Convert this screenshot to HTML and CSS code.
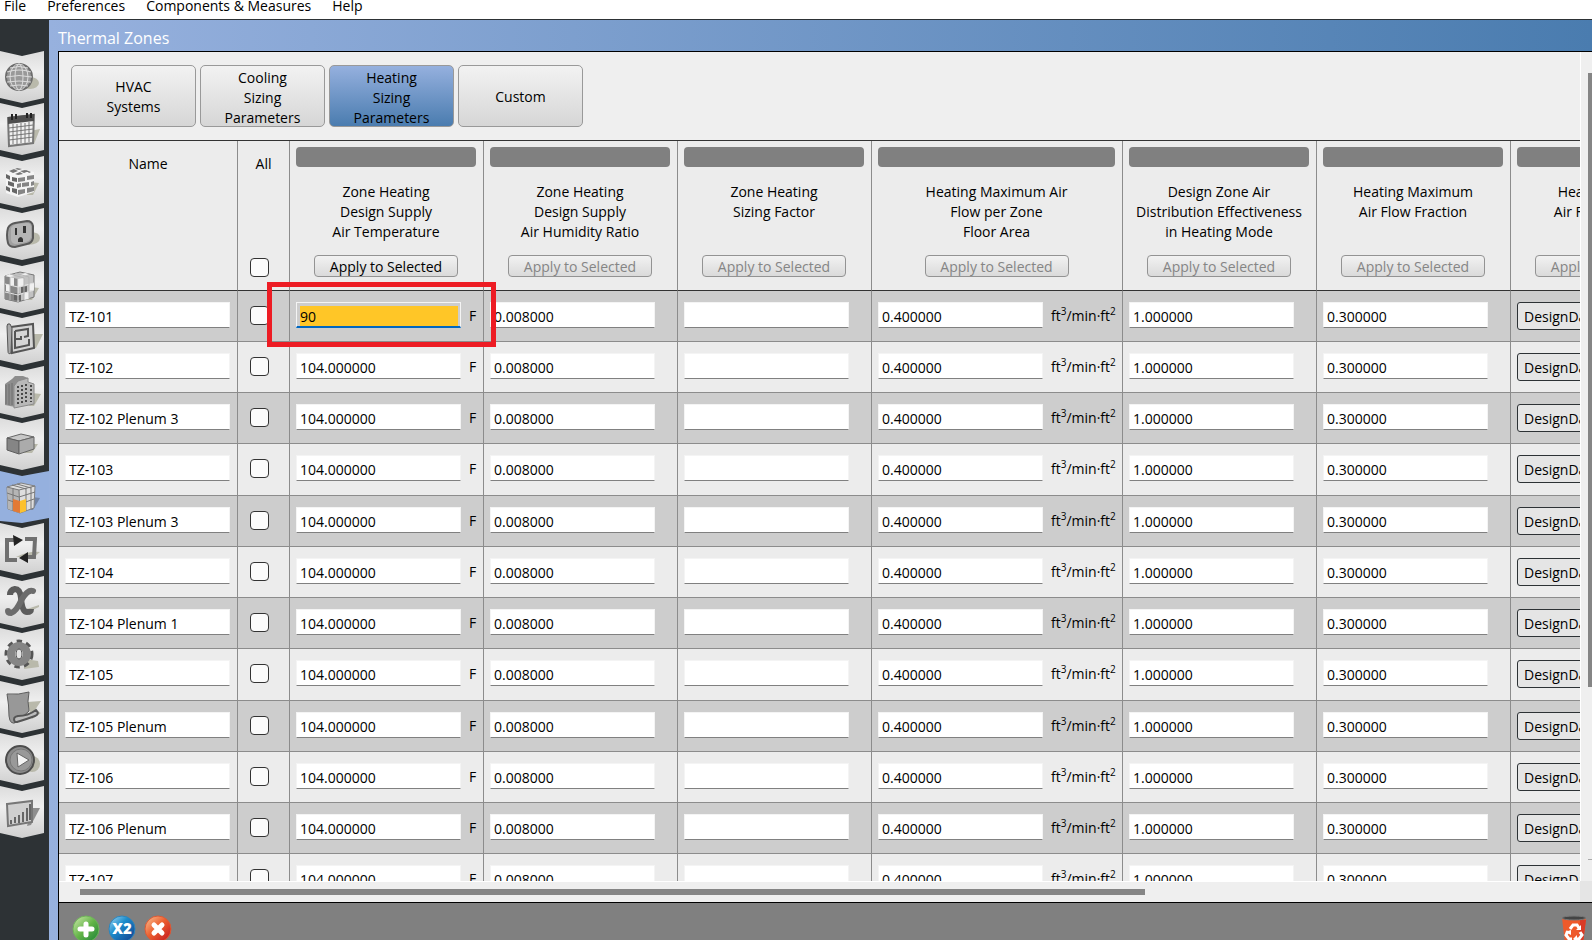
FILE: index.html
```html
<!DOCTYPE html>
<html lang="en">

<head>
  <meta charset="UTF-8">
  <meta name="viewport" content="width=device-width, initial-scale=1.0">
  <title>Thermal Zones</title>
  <link rel="stylesheet" href="styles.css">
</head>

<body>
  <nav class="menu-bar">
    <a href="#file">File</a>
    <a href="#preferences">Preferences</a>
    <a href="#components">Components &amp; Measures</a>
    <a href="#help">Help</a>
  </nav>

  <div class="app">
    <nav class="sidebar">
      <a href="#site" class="side-tab" aria-label="Site">
        <svg viewBox="0 0 48 52">
          <ellipse class="shade" cx="30" cy="32" rx="9" ry="6" />
          <circle cx="19" cy="26" r="13" fill="#999" stroke="#6d6d6d" stroke-width="2" />
          <g fill="none" stroke="#dcdcdc">
            <ellipse cx="19" cy="26" rx="4" ry="13" />
            <ellipse cx="19" cy="26" rx="9" ry="13" />
            <path d="M6 26q13-3 26 0M7 21q12-4 24 0M10 17q9-3 18 0M7 31q12-2 24 0M10 35q9-2 18 0" />
          </g>
        </svg>
      </a>
      <a href="#schedules" class="side-tab" aria-label="Schedules">
        <svg viewBox="0 0 48 52">
          <path class="shade" d="M30 28l10-2-6 15h-6z" />
          <path d="M8 15l26-3-1 28-24 3z" fill="#f0f0f0" stroke="#777" stroke-width="2" />
          <path d="M8 14l26-3v7L8 21z" fill="#4e4e4e" />
          <path d="M12 11v6M16 11v5M27 10v5M31 10v5" stroke="#222" stroke-width="2" />
          <path d="M9 25l24-3M9 29l24-3M9 33l24-3M9 37l24-3M13 21v20M17 21v20M21 20v20M25 20v20M29 19v20" stroke="#777" fill="none" />
        </svg>
      </a>
      <a href="#constructions" class="side-tab" aria-label="Constructions">
        <svg viewBox="0 0 48 52">
          <path class="shade" d="M30 26l9 1-6 12h-6z" />
          <path d="M6 16l11-4 17 4v20l-16 5L6 37z" fill="#f5f5f5" />
          <path d="M9 15l5-2 4 2-5 2zM17 12l5 1-3 1-4-1zM20 15l5-1 4 1-5 2zM26 14l5 2-2 1zM15 18l5-2 3 2-5 1z" fill="#777" />
          <path d="M6 18l4 2v4l-4-2zM12 21l5 1v4l-5-1zM6 30l4 2v4l-4-2zM12 32l5 1v5l-5-2zM8 25l6 2v4l-6-2z" fill="#666" />
          <path d="M18 22l7-1v4l-7 1zM27 20l7-1v4l-7 1zM17 28l4-1v4l-4 1zM22 27l7-1v4l-7 1zM31 26l3-1v4l-3 1zM18 34l7-1v4l-7 2zM27 32l7-1v4l-7 2z" fill="#858585" />
        </svg>
      </a>
      <a href="#loads" class="side-tab" aria-label="Loads">
        <svg viewBox="0 0 48 52">
          <path class="shade" d="M30 24q10 0 10 6t-12 7z" />
          <path d="M8 20q2-4 7-5l12-2q5 0 6 5v12q-1 5-6 6l-12 3q-6 0-7-4-2-8 0-15z" fill="#a0a0a0" stroke="#595959" stroke-width="2" />
          <path d="M11 20q2-3 6-4l10-1q4 0 4 4v10q-1 4-5 5l-10 2q-4 0-5-4z" fill="#b5b5b5" />
          <path d="M15 20h2v7h-2zM23 18h3v7h-3zM18 34v-3q3-4 5 0v3z" fill="#333" />
        </svg>
      </a>
      <a href="#space-types" class="side-tab" aria-label="Space Types">
        <svg viewBox="0 0 48 52">
          <path class="shade" d="M30 26l9 1-7 12h-6z" />
          <path d="M5 15l15-4 14 3v22l-16 5L5 38z" fill="#c2c2c2" stroke="#777" />
          <path d="M5 15l13 3v23L5 38z" fill="#888" />
          <path d="M18 18l6-1v8l-6 1zM24 32l5-1v7l-5 1zM29 23l5-1v7l-5 1zM5 15l5-2 5 2-5 1zM10 16l4 1v8l-4-1zM6 23l4 1v7l-4-1zM20 14l5-2 4 1-5 2z" fill="#f0f0f0" />
          <path d="M21 26l6-1v6l-6 1zM14 32l7 1v7l-7-1z" fill="#656565" />
          <path d="M5 23l13 3 16-4M5 31l13 3 16-5M18 18v23" fill="none" stroke="#e3e3e3" />
          <path d="M10 16v23M24 17v22M29 16v22M10 13l14 4M15 12l14 4" fill="none" stroke="#b5b5b5" />
        </svg>
      </a>
      <a href="#geometry" class="side-tab" aria-label="Geometry">
        <svg viewBox="0 0 48 52">
          <path class="shade" d="M32 21l11 0-7 14h-6z" />
          <path d="M11 14l22-3 1 24-22 5z" fill="#d5d5d5" stroke="#555" stroke-width="2" />
          <path d="M7 13q0-3 3-2l2 4-1 25q-3 2-3-2z" fill="#aaa" stroke="#555" />
          <path d="M15 18l13-2v7l-4 1M15 18v17l14-3v-6M15 26h6v-3" fill="none" stroke="#555" stroke-width="2" />
        </svg>
      </a>
      <a href="#facility" class="side-tab" aria-label="Facility">
        <svg viewBox="0 0 48 52">
          <path class="shade" d="M32 27l9 1-7 12h-5z" />
          <path d="M5 18l7-5 3-3h8l5 2v5l-13 4v20L5 39z" fill="#8d8d8d" />
          <path d="M14 20l4-5 10-3v4l6 2v20l-20 4z" fill="#b8b8b8" stroke="#8a8a8a" />
          <path d="M18 20v18M22 19v18M26 18v18M31 19v17" stroke="#484848" stroke-width="2" stroke-dasharray="2 2" />
          <path d="M6 19v19M9 18v21M12 17v22" stroke="#6f6f6f" />
        </svg>
      </a>
      <a href="#spaces" class="side-tab" aria-label="Spaces">
        <svg viewBox="0 0 48 52">
          <path class="shade" d="M30 26l8 0-6 9h-8z" />
          <path d="M7 20l14-4 13 3-15 4z" fill="#c7c7c7" stroke="#666" />
          <path d="M7 20l12 3v13L7 32z" fill="#858585" stroke="#5d5d5d" />
          <path d="M19 23l15-4v12l-15 5z" fill="#ababab" stroke="#666" />
        </svg>
      </a>
      <a href="#thermal-zones" class="side-tab selected" aria-label="Thermal Zones">
        <svg viewBox="0 0 48 52">
          <path d="M32 26l8 1-7 12h-6z" fill="#7184a6" />
          <path d="M7 16l14-4 14 3-1 22-14 5-12-4z" fill="#dedede" stroke="#808080" />
          <path d="M7 16l12 3 1 23-12-4z" fill="#b5b5b5" />
          <path d="M7 22l12 4 16-5M8 29l12 4 14-5M13 17v23M19 19l1 22M26 17v23M31 16v22M12 14l14 4M17 13l14 4M7 16l12 3 16-4" fill="none" stroke="#777" />
          <path d="M13 28l7 2v12l-7-2z" fill="#e37a35" />
          <path d="M20 30l6-2v12l-6 2z" fill="#fcc12e" />
        </svg>
      </a>
      <a href="#hvac-systems" class="side-tab" aria-label="HVAC Systems">
        <svg viewBox="0 0 48 52">
          <path d="M16 34q12-6 24-5l-6 5z" class="shade" />
          <path d="M15 17H7v20h10M25 16h10l-1 18h-7" fill="none" stroke="#707070" stroke-width="4" />
          <path d="M13 12l10 5-9 6zM28 29l-9 6 9 5z" fill="#222" />
        </svg>
      </a>
      <a href="#variables" class="side-tab" aria-label="Output Variables">
        <svg viewBox="0 0 48 52">
          <path d="M24 34l15-5v2l-13 6z" class="shade" />
          <path d="M10 19q0-5 5-6 5 0 6 9 1 14 6 14 4 0 4-3" fill="none" stroke="#5c5c5c" stroke-width="6" />
          <path d="M33 15q-5-2-11 8-6 13-11 14-3 0-3-2" fill="none" stroke="#6c6c6c" stroke-width="6" stroke-linecap="round" />
        </svg>
      </a>
      <a href="#settings" class="side-tab" aria-label="Simulation Settings">
        <svg viewBox="0 0 48 52">
          <path class="shade" d="M25 31l13 2 1 6-15 2z" />
          <circle cx="19" cy="26" r="12" fill="none" stroke="#555" stroke-width="5" stroke-dasharray="5 4" />
          <circle cx="19" cy="26" r="8" fill="none" stroke="#858585" stroke-width="8" />
          <ellipse cx="19" cy="26" rx="3" ry="5" fill="#e3e3e3" stroke="#555" />
        </svg>
      </a>
      <a href="#scripts" class="side-tab" aria-label="Measures">
        <svg viewBox="0 0 48 52">
          <path class="shade" d="M27 21l14-1-6 9 6 3-9 6z" />
          <path d="M7 13q12 1 22-2-2 9 0 19l-12 11q-7 4-8-6 0-11-2-22z" fill="#989898" stroke="#5d5d5d" />
          <path d="M15 41q-3-5 3-6 10 0 18-6 4 4-1 6-8 3-18 6z" fill="#bcbcbc" stroke="#555" stroke-width="2" />
        </svg>
      </a>
      <a href="#run" class="side-tab" aria-label="Run Simulation">
        <svg viewBox="0 0 48 52">
          <ellipse class="shade" cx="32" cy="31" rx="8" ry="8" />
          <circle cx="20" cy="27" r="14" fill="#8b8b8b" stroke="#4d4d4d" stroke-width="2" />
          <circle cx="21" cy="27" r="11" fill="#999" stroke="#777" />
          <path d="M17 20l12 7-11 7z" fill="#f4f4f4" stroke="#666" />
        </svg>
      </a>
      <a href="#results" class="side-tab" aria-label="Results Summary">
        <svg viewBox="0 0 48 52">
          <path d="M32 22h8l-9 17-4 1z" fill="#8e8e8e" />
          <path d="M7 18l25-3v21L8 40z" fill="#cfcfcf" stroke="#777" stroke-width="2" />
          <path d="M11 38v-4M15 37v-6M19 37v-8M23 36V26M27 35V22M30 34V18" stroke="#666" stroke-width="2" />
        </svg>
      </a>
    </nav>

    <main class="main">
      <h1 class="title">Thermal Zones</h1>

      <div class="panel">
        <div class="viewport">
          <div class="tabs">
            <button type="button" class="tab">HVAC<br>Systems</button>
            <button type="button" class="tab">Cooling<br>Sizing<br>Parameters</button>
            <button type="button" class="tab active">Heating<br>Sizing<br>Parameters</button>
            <button type="button" class="tab">Custom</button>
          </div>

          <table class="zones">
            <colgroup>
              <col class="col-name">
              <col class="col-all">
              <col class="col-field">
              <col class="col-field">
              <col class="col-field">
              <col class="col-wide">
              <col class="col-field">
              <col class="col-field">
              <col class="col-field">
            </colgroup>
            <thead>
              <tr id="zone-head">
                <th><div class="head-name">Name</div></th>
                <th>
                  <div class="head-all">
                    <label for="select-all">All</label>
                    <input type="checkbox" id="select-all">
                  </div>
                </th>
              </tr>
            </thead>
            <tbody id="zone-rows">
              <!-- Zone rows are added here -->
            </tbody>
          </table>
        </div>
        <div class="scroll-y"><div class="thumb-y"></div><div class="scroll-end"></div></div>
        <div class="scroll-x"><div class="thumb-x"></div></div>
        <div class="scroll-corner"></div>
      </div>

      <footer class="actions">
        <button type="button" aria-label="Add zone">
          <svg viewBox="0 0 28 28">
            <defs>
              <linearGradient id="green" x1="0" y1="0" x2="1" y2="1"><stop offset="0" stop-color="#d3ecb0" /><stop offset=".5" stop-color="#62b447" /><stop offset="1" stop-color="#197f38" /></linearGradient>
              <linearGradient id="blue" x1="0" y1="0" x2="1" y2="1"><stop offset="0" stop-color="#a9dcf5" /><stop offset=".4" stop-color="#1c8ccb" /><stop offset="1" stop-color="#123a8b" /></linearGradient>
              <linearGradient id="red" x1="0" y1="0" x2="1" y2="1"><stop offset="0" stop-color="#fbc79a" /><stop offset=".45" stop-color="#ec6030" /><stop offset="1" stop-color="#c01220" /></linearGradient>
            </defs>
            <circle cx="14" cy="14" r="13" fill="url(#green)" stroke="#6fb35a" />
            <path d="M14 9v11M8 14h12" stroke="#fff" stroke-width="5" stroke-linecap="round" />
          </svg>
        </button>
        <button type="button" aria-label="Duplicate zone">
          <svg viewBox="0 0 28 28">
            <circle cx="14" cy="14" r="13" fill="url(#blue)" stroke="#2c85bd" />
            <text x="14" y="19" class="icon-text">X2</text>
          </svg>
        </button>
        <button type="button" aria-label="Delete zone">
          <svg viewBox="0 0 28 28">
            <circle cx="14" cy="14" r="13" fill="url(#red)" stroke="#dd5a35" />
            <path d="M10 10l8 8M18 10l-8 8" stroke="#fff" stroke-width="5" stroke-linecap="round" />
          </svg>
        </button>
        <button type="button" class="purge" aria-label="Purge unused">
          <svg viewBox="0 0 28 28">
            <path d="M2 3l3 25h18l3-25z" fill="#ee5a2b" />
            <path d="M20 5h6l-3 23h-4z" fill="#d93a26" />
            <ellipse cx="14" cy="3" rx="12" ry="2" fill="#444" stroke="#777" />
            <path d="M10 14l3-4h4l2 3M20 17l2 3-3 4h-3M12 24H9l-3-4 2-4" fill="none" stroke="#fff" stroke-width="3" />
            <path d="M21 10v5h-5zM17 20v7l-4-3zM5 17l6-2v5z" fill="#fff" />
          </svg>
        </button>
      </footer>
    </main>
  </div>

  <script>
    // Table columns after the name and the tick box
    const fields = [
      { label: ['Zone Heating', 'Design Supply', 'Air Temperature'], value: '104.000000', unit: 'F', enabled: true },
      { label: ['Zone Heating', 'Design Supply', 'Air Humidity Ratio'], value: '0.008000' },
      { label: ['Zone Heating', 'Sizing Factor'], value: '' },
      { label: ['Heating Maximum Air', 'Flow per Zone', 'Floor Area'], value: '0.400000', unit: 'ft<sup>3</sup>/min·ft<sup>2</sup>' },
      { label: ['Design Zone Air', 'Distribution Effectiveness', 'in Heating Mode'], value: '1.000000' },
      { label: ['Heating Maximum', 'Air Flow Fraction'], value: '0.300000' },
      { label: ['Heating Design', 'Air Flow Method'], options: ['DesignDay', 'DesignDayWithLimit', 'Flow/Zone'] }
    ];

    const zones = [
      'TZ-101', 'TZ-102', 'TZ-102 Plenum 3', 'TZ-103', 'TZ-103 Plenum 3', 'TZ-104',
      'TZ-104 Plenum 1', 'TZ-105', 'TZ-105 Plenum', 'TZ-106', 'TZ-106 Plenum', 'TZ-107'
    ];

    // Column headings
    const head = document.getElementById('zone-head');
    fields.forEach(field => {
      const th = document.createElement('th');
      th.innerHTML = `
        <div class="head-field">
          <div class="head-bar"></div>
          <div class="head-label">${field.label.join('<br>')}</div>
          <button type="button" class="apply" ${field.enabled ? '' : 'disabled'}>Apply to Selected</button>
        </div>
      `;
      head.appendChild(th);
    });

    // One cell of a zone row
    function fieldCell(zone, field, editing) {
      const name = `${zone} ${field.label.join(' ')}`;
      if (field.options) {
        const options = field.options.map(option => `<option>${option}</option>`).join('');
        return `<td><div class="cell"><select aria-label="${name}">${options}</select></div></td>`;
      }
      const unit = field.unit ? `<span class="unit">${field.unit}</span>` : '';
      return `
        <td class="${editing ? 'marked' : ''}">
          <div class="cell">
            <input type="text" class="${editing ? 'editing' : ''}" aria-label="${name}" value="${editing ? '90' : field.value}">
            ${unit}
          </div>
        </td>
      `;
    }

    const rows = document.getElementById('zone-rows');
    zones.forEach((zone, row) => {
      const tr = document.createElement('tr');
      tr.innerHTML = `
        <td><div class="cell"><input type="text" aria-label="Zone name" value="${zone}"></div></td>
        <td><div class="cell cell-check"><input type="checkbox" aria-label="Select ${zone}"></div></td>
        ${fields.map((field, col) => fieldCell(zone, field, row === 0 && col === 0)).join('')}
      `;
      rows.appendChild(tr);
    });
  </script>
</body>

</html>
```
FILE: styles.css
```css
*,
*::after {
  margin: 0;
  padding: 0;
  box-sizing: border-box;
}

body {
  display: flex;
  flex-direction: column;
  height: 100vh;
  overflow: hidden;
  font-family: "Open Sans", "Noto Sans", sans-serif;
  font-size: 14px;
  line-height: 20px;
  color: #000;
  background-color: #fff;
}

button,
input,
select {
  font: inherit;
  color: inherit;
}

/* Menu */
.menu-bar {
  display: flex;
  flex: none;
  gap: 21px;
  height: 20px;
  padding-left: 4px;
  border-bottom: 1px solid #2d3235;
  line-height: 12px;
}

.menu-bar a {
  color: #000;
  text-decoration: none;
}

.app {
  display: flex;
  flex: 1;
  min-height: 0;
}

/* Sidebar */
.sidebar {
  display: flex;
  flex: none;
  flex-direction: column;
  width: 49px;
  padding-top: 31px;
  background-color: #2d3235;
}

.side-tab {
  display: block;
  flex: none;
  height: 52px;
  background: linear-gradient(#dcdcdc, #efefef 40%, #cfcfcf);
  clip-path: polygon(0 0, 22px 5px, 44px 0, 44px 47px, 22px 52px, 0 47px);
}

.side-tab:nth-child(even) {
  margin-bottom: 1px;
}

.side-tab.selected {
  background: #95b0de;
  clip-path: polygon(0 0, 22px 5px, 49px 0, 49px 47px, 22px 52px, 0 50px);
}

.side-tab svg {
  display: block;
  width: 48px;
  height: 52px;
}

.shade {
  fill: #b9b9ab;
}

/* Main area */
.main {
  display: flex;
  flex: 1;
  flex-direction: column;
  min-width: 0;
  padding-left: 9px;
  background: linear-gradient(to right, #97b1de, #4a7caf);
}

.title {
  flex: none;
  height: 31px;
  color: #fff;
  font-size: 16px;
  font-weight: 400;
  line-height: 37px;
}

.panel {
  display: grid;
  flex: 1;
  grid-template-columns: minmax(0, 1fr) 12px;
  grid-template-rows: minmax(0, 1fr) 21px;
  min-height: 0;
  border-top: 1px solid #000;
  border-left: 1px solid #000;
  background-color: #efefef;
}

.viewport {
  overflow: hidden;
}

.tabs {
  display: flex;
  gap: 4px;
  padding: 13px 12px;
}

.tab {
  width: 125px;
  height: 62px;
  padding-top: 2px;
  border: 1px solid #999;
  border-radius: 5px;
  background: linear-gradient(#f2f2f2, #d6d6d6);
}

.tab.active {
  background: linear-gradient(#95b0de, #4a7caf);
}

/* Zone table */
.zones {
  width: 1646px;
  table-layout: fixed;
  border-collapse: separate;
  border-spacing: 0;
  border-top: 1px solid #333;
}

.col-name {
  width: 179px;
}

.col-all {
  width: 52px;
}

.col-field {
  width: 194px;
}

.col-wide {
  width: 251px;
}

.zones th,
.zones td {
  border-right: 1px solid #8c8c8c;
  border-bottom: 1px solid #8c8c8c;
  vertical-align: top;
}

.zones th {
  height: 150px;
  border-bottom-color: #333;
  background-color: #ececec;
  font-weight: normal;
}

.zones td {
  height: 51px;
  background-color: #ececec;
}

.zones tr:nth-child(odd) td {
  background-color: #cdcdcd;
}

.zones tr:nth-child(4n) td {
  height: 52px;
}

.head-name {
  padding: 13px 6px;
}

.head-all {
  display: flex;
  flex-direction: column;
  align-items: center;
  justify-content: space-between;
  height: 149px;
  padding: 13px 6px;
}

.head-all input {
  align-self: flex-start;
  margin-left: 6px;
}

.head-field {
  display: flex;
  flex-direction: column;
  align-items: center;
  padding: 6px 7px 0 6px;
}

.head-bar {
  width: 100%;
  height: 20px;
  border-radius: 4px;
  background-color: #808080;
}

.head-label {
  height: 88px;
  padding-top: 15px;
  white-space: nowrap;
}

.apply {
  width: 144px;
  height: 22px;
  padding-top: 1px;
  border: 1px solid #939393;
  border-radius: 4px;
  background: linear-gradient(#f2f2f2, #dadada);
  line-height: 20px;
}

.apply:disabled {
  color: #858585;
}

.cell {
  display: flex;
  align-items: flex-start;
  gap: 8px;
  padding: 11px 0 0 6px;
}

.cell-check {
  padding: 15px 0 0 12px;
}

input[type="text"] {
  flex: none;
  width: 165px;
  height: 26px;
  padding: 2px 3px 0;
  border: 1px solid #f4f4f4;
  border-bottom-color: #808080;
  background-color: #fff;
  outline: none;
}

input[type="text"].editing {
  padding: 3px 2px 0 3px;
  border-bottom: 2px solid #0067c0;
  background: #fff linear-gradient(#ffc627, #ffc627) content-box;
}

input[type="checkbox"] {
  flex: none;
  width: 19px;
  height: 19px;
  border: 1px solid #333;
  border-radius: 4px;
  background-color: #fbfbfb;
  appearance: none;
}

input[type="checkbox"]:checked {
  background-color: #0067c0;
}

select {
  width: 165px;
  height: 28px;
  padding: 2px 6px 0;
  border: 1px solid #2d3235;
  border-radius: 3px;
  background-color: #e5e5e5;
  appearance: none;
}

.unit {
  padding-top: 4px;
  white-space: nowrap;
}

.unit sup {
  font-size: 10px;
  line-height: 0;
}

/* Red frame round the value being edited */
.marked {
  position: relative;
}

.marked::after {
  content: "";
  position: absolute;
  z-index: 1;
  top: -9px;
  left: -23px;
  width: 229px;
  height: 65px;
  border: 5px solid #ed1c24;
  pointer-events: none;
}

/* Scroll bars */
.scroll-y {
  display: flex;
  flex-direction: column;
  padding: 21px 0 21px 7px;
  border-left: 1px solid #fff;
}

.thumb-y {
  height: 78%;
  background-color: #858585;
}

.scroll-end {
  height: 1px;
  margin-top: auto;
  background-color: #aaa;
}

.scroll-x {
  padding: 7px 0 0 21px;
  border-top: 1px solid #fff;
}

.thumb-x {
  width: 71%;
  height: 6px;
  background-color: #858585;
}

.scroll-corner {
  background-color: #e5e5e5;
}

/* Bottom buttons */
.actions {
  display: flex;
  flex: none;
  gap: 8px;
  height: 38px;
  padding: 12px 4px 0 13px;
  overflow: hidden;
  border-top: 1px solid #000;
  border-left: 1px solid #000;
  background-color: #808080;
}

.actions button {
  width: 28px;
  height: 28px;
  border: none;
  background: none;
}

.actions svg {
  display: block;
  width: 28px;
  height: 28px;
}

.actions .purge {
  margin-left: auto;
}

.icon-text {
  fill: #fff;
  font-size: 15px;
  font-weight: 800;
  text-anchor: middle;
}
```
